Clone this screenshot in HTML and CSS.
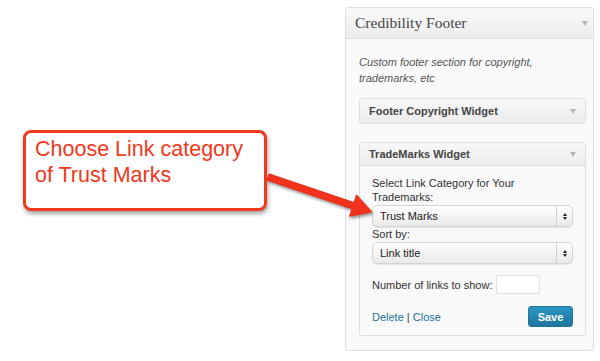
FILE: index.html
```html
<!DOCTYPE html>
<html>
<head>
<meta charset="utf-8">
<link rel="stylesheet" href="styles.css">
</head>
<body>
<div class="callout">Choose Link category<br>of Trust Marks</div>
<div class="panel">
  <div class="panel-head"><span class="panel-title">Credibility Footer</span><span class="tri"></span></div>
  <div class="panel-body">
    <p class="desc">Custom footer section for copyright,<br>trademarks, etc</p>
    <div class="widget">
      <div class="whead closed"><span>Footer Copyright Widget</span><span class="tri"></span></div>
    </div>
    <div class="widget open">
      <div class="whead"><span>TradeMarks Widget</span><span class="tri"></span></div>
      <div class="wbody">
        <div class="label">Select Link Category for Your<br>Trademarks:</div>
        <div class="select"><span class="sel-text">Trust Marks</span><span class="sel-arrows"><span class="up"></span><span class="down"></span></span></div>
        <div class="label sort">Sort by:</div>
        <div class="select"><span class="sel-text">Link title</span><span class="sel-arrows"><span class="up"></span><span class="down"></span></span></div>
        <div class="num-row"><span>Number of links to show:</span><span class="num-input"></span></div>
        <div class="actions">
          <span class="links"><a class="lnk">Delete</a> | <a class="lnk">Close</a></span>
          <span class="save">Save</span>
        </div>
      </div>
    </div>
  </div>
</div>
<svg class="arrow" width="600" height="361" viewBox="0 0 600 361">
  <defs>
    <filter id="sh" x="-20%" y="-20%" width="140%" height="140%">
      <feDropShadow dx="1" dy="2" stdDeviation="1.5" flood-color="#000" flood-opacity="0.45"/>
    </filter>
  </defs>
  <polygon points="269,173.8 354,202.5 356.5,194.8 372,212 349.5,216.3 352,208.8 267,180.2" fill="#f2321c" stroke="#d9260f" stroke-width="0.8" stroke-linejoin="round" filter="url(#sh)"/>
</svg>
</body>
</html>
```
FILE: styles.css
```css
html, body {
  margin: 0;
  padding: 0;
  background: #fff;
}
body {
  width: 600px;
  height: 361px;
  position: relative;
  display: flex;
  align-items: flex-start;
  font-family: "Liberation Sans", Arial, sans-serif;
  overflow: hidden;
}
.callout {
  margin: 130px 0 0 23px;
  width: 229px;
  height: 72px;
  border: 3px solid #f03a1f;
  border-radius: 8px;
  padding: 3px 0 0 9px;
  font-size: 21.5px;
  line-height: 26px;
  color: #f0381c;
  background: #fff;
  box-shadow: 1px 3px 4px rgba(0,0,0,0.35);
  position: relative;
  z-index: 2;
  white-space: nowrap;
}
.panel {
  margin: 7px 0 0 78px;
  width: 249px;
  height: 344px;
  border: 1px solid #dfdfdf;
  border-radius: 3px;
  background: #fafafa;
  box-sizing: border-box;
}
.panel-head {
  height: 31px;
  box-sizing: border-box;
  border-bottom: 1px solid #dfdfdf;
  background: linear-gradient(#f9f9f9, #ececec);
  display: flex;
  align-items: center;
  justify-content: space-between;
  padding: 0 5px 0 9px;
}
.panel-title {
  font-family: "Liberation Serif", Georgia, serif;
  font-size: 15.5px;
  color: #464646;
}
.tri {
  width: 0;
  height: 0;
  border-left: 3.5px solid transparent;
  border-right: 3.5px solid transparent;
  border-top: 5px solid #b5b5b5;
}
.panel-body {
  padding: 15px 7px 0 13px;
}
.desc {
  margin: 0;
  font-size: 11px;
  line-height: 16px;
  font-style: italic;
  color: #555;
}
.widget {
  border: 1px solid #dfdfdf;
  border-radius: 3px;
  background: #f9f9f9;
  margin-top: 12px;
}
.widget.open {
  margin-top: 18px;
}
.whead {
  height: 24px;
  box-sizing: border-box;
  display: flex;
  align-items: center;
  justify-content: space-between;
  padding: 0 9px 0 9px;
  background: linear-gradient(#f8f8f8, #ececec);
  font-size: 11px;
  font-weight: bold;
  color: #464646;
}
.whead.closed {
  border-radius: 3px;
}
.open .whead {
  height: 23px;
  border-bottom: 1px solid #dfdfdf;
}
.wbody {
  padding: 10px 12px 8px 12px;
  font-size: 11px;
  color: #333;
  background: #f9f9f9;
}
.label {
  line-height: 14px;
}
.label.sort {
  line-height: 13px;
  margin-top: 1px;
}
.select {
  height: 22px;
  box-sizing: border-box;
  border: 1px solid #d4d4d4;
  border-radius: 5px;
  background: linear-gradient(#ffffff, #e9e9e9);
  display: flex;
  align-items: center;
  margin-top: 1px;
  box-shadow: 0 1px 1px rgba(0,0,0,0.08);
}
.sel-text {
  flex: 1;
  padding-left: 7px;
  color: #222;
  font-size: 11px;
}
.sel-arrows {
  width: 15px;
  height: 100%;
  border-left: 1px solid #d0d0d0;
  display: flex;
  flex-direction: column;
  align-items: center;
  justify-content: center;
  gap: 1px;
}
.up {
  width: 0; height: 0;
  border-left: 2.5px solid transparent;
  border-right: 2.5px solid transparent;
  border-bottom: 3px solid #222;
}
.down {
  width: 0; height: 0;
  border-left: 2.5px solid transparent;
  border-right: 2.5px solid transparent;
  border-top: 3px solid #222;
}
.num-row {
  margin-top: 11px;
  display: flex;
  align-items: center;
  gap: 4px;
  color: #333;
}
.num-input {
  width: 42px;
  height: 17px;
  border: 1px solid #dfdfdf;
  background: #fff;
  border-radius: 2px;
}
.actions {
  margin-top: 12px;
  display: flex;
  align-items: center;
  justify-content: space-between;
}
.links {
  color: #333;
}
.lnk {
  color: #21759b;
}
.save {
  width: 45px;
  height: 21px;
  box-sizing: border-box;
  border: 1px solid #21759b;
  border-radius: 3px;
  background: linear-gradient(#2a95c5, #21759b);
  color: #fff;
  font-weight: bold;
  font-size: 11px;
  display: flex;
  align-items: center;
  justify-content: center;
}
.arrow {
  position: absolute;
  left: 0;
  top: 0;
  z-index: 3;
  pointer-events: none;
}
```
